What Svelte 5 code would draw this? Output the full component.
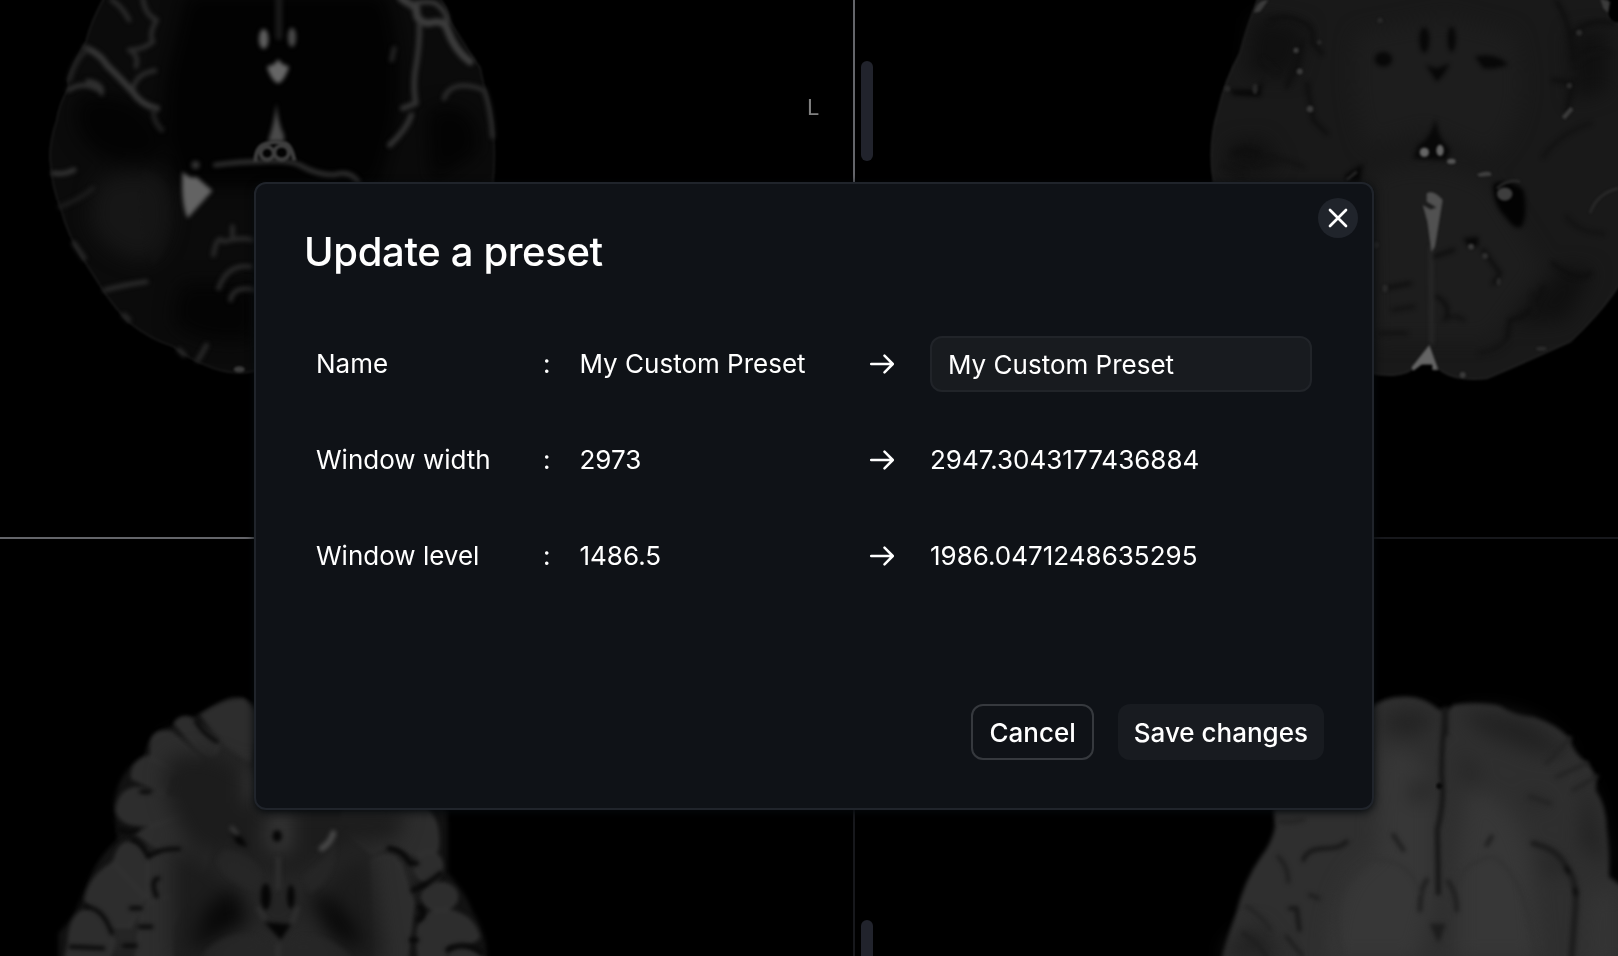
<script>
  let name = $state('My Custom Preset');
  const rows = [
    { label: 'Window width', from: '2973', to: '2947.3043177436884' },
    { label: 'Window level', from: '1486.5', to: '1986.0471248635295' }
  ];
</script>

{#snippet arrow()}
  <svg class="arrow" viewBox="0 0 24 20" fill="none" stroke="#fff" stroke-width="2.5" stroke-linecap="round" stroke-linejoin="round">
    <path d="M1.2 10H22.8M14.5 1.7L22.8 10L14.5 18.3" />
  </svg>
{/snippet}

<div class="screen">
  <div class="viewport active">
    <svg class="scan" viewBox="0 0 853 537" preserveAspectRatio="xMinYMin slice">
      <defs>
        <filter id="s1" x="-20%" y="-20%" width="140%" height="140%" color-interpolation-filters="sRGB"><feGaussianBlur stdDeviation="6" /></filter>
        <filter id="s2" x="-30%" y="-30%" width="160%" height="160%" color-interpolation-filters="sRGB"><feGaussianBlur stdDeviation="28" /></filter>
        <filter id="edge" x="-20%" y="-20%" width="140%" height="140%" color-interpolation-filters="sRGB"><feGaussianBlur stdDeviation="3.5" /></filter>
      </defs>
      <g transform="scale(.3443 .3333)">
        <path filter="url(#edge)" fill="#0b0b0b" stroke="#191919" stroke-width="5" d="M310-20Q265 60 250 125Q215 185 197 240L200 262Q172 310 165 360Q140 440 147 490Q150 560 178 630Q195 700 240 775Q275 830 305 880Q340 930 372 965Q440 1020 500 1038Q550 1080 620 1105Q700 1132 760 1105L1180 1000L1400 700Q1432 600 1435 500Q1440 380 1415 290Q1400 240 1395 205Q1340 120 1305 60Q1300 10 1260-20Z" />
        <g filter="url(#s2)">
          <path fill="#020202" d="M540-20L1120-20Q1180 180 1150 380L1100 560L520 560Q440 340 510 120Z" />
          <path fill="#030303" d="M230 290Q420 260 470 410Q500 520 300 470Q190 400 230 290M1240 330Q1400 280 1390 460L1250 550Z" />
          <path fill="#161616" d="M280 550Q400 490 480 550Q520 740 420 780Q300 770 260 660Z" />
          <path fill="#040404" d="M520 850L740 850V1020Q580 1040 500 970Z" />
        </g>
        <path filter="url(#s1)" fill="#151515" opacity=".35" d="M410 510Q490 520 495 610Q505 760 440 800Q410 660 410 510Z" />
        <g filter="url(#s1)" fill="none" stroke-linecap="round" stroke-linejoin="round">
          <g stroke="#363636" stroke-width="14">
            <path d="M325 0Q355 20 375 60M415-5Q420 45 455 60Q430 105 445 125Q415 150 375 150Q405 165 395 200M450 212Q395 220 385 270" stroke="#2a2a2a" />
            <path d="M250 145Q290 160 310 195Q345 230 385 275Q410 315 455 325" stroke-width="19" />
            <path d="M445 330Q445 365 470 390" stroke="#212121" />
            <path d="M200 270Q245 240 295 275M255 243Q300 250 295 280" stroke="#303030" />
            <path d="M250 150Q215 185 202 240" stroke="#242424" />
            <path d="M155 520Q185 525 215 510" />
            <path d="M175 620Q230 600 270 565" stroke="#1c1c1c" />
            <path d="M305 870Q360 855 425 845" stroke="#2a2a2a" />
            <path d="M215 730L245 775M360 945L375 960M520 1050L535 1065M575 1080Q590 1055 600 1035" stroke="#292929" />
            <path d="M1165-5L1210 25Q1205 65 1245 70Q1290 55 1300 90Q1320 150 1365 185" stroke="#3d3d3d" stroke-width="22" />
            <path d="M1190 15Q1230 0 1265 10Q1300 35 1300 70" stroke="#393939" />
            <path d="M1218 75Q1220 135 1205 220Q1200 270 1208 310L1170 325M1195 345Q1180 390 1132 435" stroke="#333" stroke-width="16" />
            <path d="M1145 145L1138 180" stroke="#242424" />
            <path d="M1290 295Q1310 235 1405 270Q1425 320 1430 410" stroke="#2b2b2b" />
            <path d="M625 495Q700 485 750 485Q840 478 870 495Q920 525 970 525Q1015 510 1040 545" stroke="#303030" />
            <path d="M620 765Q630 700 650 725Q695 710 735 720M675 680V705M635 865Q660 790 730 800M670 900Q675 855 745 870" stroke="#292929" />
          </g>
          <path d="M810-10V110" stroke="#191919" stroke-width="20" />
        </g>
        <g filter="url(#s1)" fill="#666">
          <ellipse cx="766" cy="117" rx="14" ry="30" fill="#5d5d5d" />
          <ellipse cx="848" cy="112" rx="12" ry="29" fill="#484848" />
          <path d="M775 200L797 192L808 178L820 192L840 200Q825 245 808 250Q789 245 775 200Z" />
          <path d="M803 310Q807 370 825 405V425H778Q797 370 803 310Z" fill="#4a4a4a" />
          <path d="M530 515Q555 540 570 530L617 572L545 655Q525 610 530 515Z" fill="#636363" />
          <circle cx="568" cy="495" r="12" fill="#333" />
        </g>
        <g filter="url(#edge)" fill="none" stroke="#3e3e3e" stroke-width="12"><path d="M742 485Q742 435 780 430Q798 420 825 430Q845 430 855 482" /><circle cx="776" cy="460" r="19" /><circle cx="818" cy="458" r="21" /></g>
        <ellipse cx="695" cy="1108" rx="16" ry="9" fill="#3c3c3c" filter="url(#edge)" />
      </g>
    </svg>
    <span class="side">L</span>
  </div>

  <div class="viewport">
    <svg class="scan" viewBox="855 0 763 537" preserveAspectRatio="xMinYMin slice">
      <g transform="translate(1180 0) scale(.33333)">
        <path filter="url(#edge)" fill="#191919" stroke="#1f1f1f" stroke-width="6" d="M240-20Q200 80 180 160Q135 240 115 330Q83 430 100 540Q120 850 350 1010Q520 1130 640 1125Q690 1120 705 1100Q745 1070 775 1105Q820 1145 920 1135Q1050 1080 1170 1025Q1250 950 1300 880L1340 820V70L1300 70Q1270 50 1285-20H240Z" />
        <g filter="url(#s2)">
          <path fill="#1d1d1d" d="M530 100Q500 280 560 440L740 390L930 470Q1070 350 1000 100L800 50Z" />
          <path fill="#1f1f1f" d="M570 530Q740 450 930 550L1090 800L930 1020H580Z" opacity=".75" />
          <path fill="#101010" d="M220 50L380 80L340 230L200 220ZM150 430L250 420L300 500L140 530ZM1170 100L1280 90V270L1180 300ZM1150 800L1240 810L1160 960L1000 970Z" />
        </g>
        <g filter="url(#s1)" fill="#080808">
          <ellipse cx="733" cy="120" rx="15" ry="38" /><ellipse cx="815" cy="118" rx="12" ry="38" />
          <path d="M738 195L770 205L810 190L790 225L770 245Z" />
          <ellipse cx="610" cy="178" rx="26" ry="22" /><path d="M885 170Q950 155 985 195L940 205L910 205Z" />
          <path d="M767 355Q773 405 790 425L810 450L800 480L700 475L715 435Q750 420 767 355Z" />
          <path d="M940 550Q990 535 1030 570Q1045 640 1025 680Q1005 690 980 655Q935 610 940 550Z" fill="#030303" />
          <path d="M495 525L550 490L540 545H500ZM850 715L895 710V735L870 745ZM150 270L230 270L250 240L240 290L160 285Z" />
        </g>
        <g filter="url(#s1)" fill="none" stroke="#0f0f0f" stroke-width="12" stroke-linecap="round">
          <path d="M270 60Q315 40 365 65Q410 85 395 125L425 160M365 130L350 200L320 260M380 250L400 360L440 400M160 460Q200 440 230 460M1130 5Q1170 60 1180 180M1120 240L1180 250L1160 330M1170 110Q1220 50 1300 70M1120 790Q1190 850 1230 820M1090 860Q1060 950 990 960L980 1020M910 750L960 820L940 850M615 865L690 850M760 770L820 750" />
          <path d="M230 490Q280 460 370 500M130 500L190 520M250 180L290 220M1190 190Q1230 150 1290 160M1090 470Q1140 400 1230 370M1160 650Q1200 700 1270 700M640 930L700 920M600 1000L680 1000M790 960Q830 940 850 960M900 1060Q950 1050 980 1020M1060 880V940" stroke="#131313" />
          <path d="M753 740L755 1030" stroke="#2d2d2d" stroke-width="9" />
          <path d="M770 890Q810 910 800 950" />
        </g>
        <g filter="url(#edge)" fill="#3c3c3c">
          <path d="M222 38Q230 0 265 0L240 35ZM1260-5L1290 5L1284 38L1270 25Z" />
          <circle cx="348" cy="151" r="8" /><circle cx="359" cy="214" r="9" /><circle cx="418" cy="127" r="7" fill="#292929" /><circle cx="390" cy="327" r="10" /><circle cx="600" cy="61" r="8" fill="#292929" />
          <circle cx="142" cy="266" r="9" fill="#282828" /><ellipse cx="225" cy="267" rx="8" ry="16" fill="#282828" />
          <circle cx="1197" cy="98" r="9" fill="#2d2d2d" /><circle cx="1168" cy="257" r="8" fill="#2d2d2d" /><path d="M1145 350L1172 320L1180 330L1155 358Z" />
          <circle cx="733" cy="457" r="14" fill="#666" /><ellipse cx="780" cy="451" rx="11" ry="17" fill="#666" /><ellipse cx="814" cy="484" rx="13" ry="8" fill="#555" />
          <path d="M890 523Q915 510 933 518V527L900 530Z" fill="#414141" /><ellipse cx="974" cy="582" rx="23" ry="20" fill="#3e3e3e" />
          <path d="M740 580Q760 568 788 600L765 740L754 755L742 665L728 615L752 628L769 622L740 605Z" fill="#515151" />
          <circle cx="873" cy="740" r="9" /><circle cx="915" cy="768" r="9" fill="#303030" /><ellipse cx="956" cy="845" rx="6" ry="11" fill="#2b2b2b" /><circle cx="586" cy="735" r="10" fill="#292929" /><ellipse cx="615" cy="865" rx="9" ry="12" fill="#292929" />
          <path d="M748 1035L775 1110H757V1093H725L700 1112L694 1103Z" fill="#656565" /><circle cx="848" cy="1125" r="9" /><ellipse cx="1084" cy="1046" rx="16" ry="6" fill="#2c2c2c" />
          <path d="M1230 640Q1250 580 1315 565M950 565Q985 535 1020 545M500 540L530 515" fill="none" stroke="#292929" stroke-width="8" />
        </g>
      </g>
    </svg>
    <i class="scroll top"></i>
  </div>

  <div class="viewport">
    <svg class="scan" viewBox="0 539 853 417" preserveAspectRatio="xMinYMin slice">
      <g transform="translate(0 660) scale(.3443 .33333)">
        <path filter="url(#s1)" fill="#121212" d="M670 112Q710 110 740 135L1270 430L1300 450V640Q1350 690 1375 760Q1415 820 1415 910H170V820Q220 770 245 690Q275 600 340 540L330 430Q345 330 420 285Q430 210 500 200Q510 165 560 170Z" />
        <path filter="url(#s2)" fill="#252525" d="M480 240L740 170V440H1230V620L1150 910H250L330 620L450 520Z" />
        <g filter="url(#s1)" fill="#2d2d2d" stroke="#323232" stroke-width="8">
          <path d="M580 165Q650 110 710 115L760 170L730 310Q690 290 645 250Z" stroke="none" /><path d="M510 190Q535 155 570 190L635 250Q630 310 580 270Z" /><path d="M440 260Q440 205 500 220L580 300L560 350L440 330Z" /><path d="M385 355Q380 310 430 290L500 330L480 400Z" /><path d="M340 450Q350 380 410 385L550 430L530 490L400 495Q350 490 340 450Z" /><path d="M395 520L540 460L620 520L590 640L500 590Z" />
          <path d="M335 600Q350 530 400 555L430 610V700L370 760L300 650Z" /><path d="M250 720Q260 650 330 610L420 710L380 800L310 800Z" /><path d="M200 850Q205 745 270 750Q320 780 330 850L310 910H190Z" /><path d="M430 600L510 570L580 640L500 800L430 760Z" /><path d="M410 770Q410 720 500 710V910H395Z" />
          <path d="M1000 440H1230Q1280 480 1270 570Q1230 590 1190 580Q1150 535 1080 580L990 500Z" /><path d="M1080 600Q1150 560 1170 640L1200 730L1180 910H1090Z" /><ellipse cx="1245" cy="620" rx="38" ry="45" /><ellipse cx="1277" cy="710" rx="50" ry="40" /><path d="M1215 870Q1200 760 1280 750Q1370 755 1390 830Q1370 860 1300 850L1290 910H1220Z" /><path d="M1310 870Q1370 850 1405 900V920H1300Z" />
        </g>
        <g filter="url(#s2)">
          <path fill="#1c1c1c" d="M490 300Q600 250 710 340L760 450L1180 450L1150 540L1000 550L930 650L700 620L560 560Q450 400 490 300Z" />
          <path fill="#1c1c1c" d="M500 560Q620 600 690 700L600 900H500ZM940 660L1070 570L1120 910H1000Z" />
          <path fill="#282828" d="M630 840Q720 750 800 850Q900 740 1010 910H600ZM650 560L760 630L730 740L640 630ZM880 640L960 570L950 660L870 730Z" />
          <path fill="#080808" d="M690 680L720 790L560 870L600 740ZM890 690Q1030 730 1050 870L960 830Z" />
          <path fill="#343434" d="M710 320H770V430H710ZM770 470L850 440V580H770Z" />
        </g>
        <g filter="url(#s1)">
          <path fill="#272727" opacity=".7" d="M650 570Q740 580 760 640Q750 700 730 690Q650 660 630 600ZM880 650Q950 600 975 550Q980 650 900 700ZM600 870Q700 780 800 865Q910 780 1020 890V910H580Z" />
          <g fill="#060606"><ellipse cx="805" cy="528" rx="14" ry="18" /><ellipse cx="772" cy="710" rx="15" ry="40" /><ellipse cx="845" cy="710" rx="11" ry="36" /><path d="M775 790L840 795L815 835Z" stroke="#060606" stroke-width="6" /><path d="M675 520Q705 530 715 558L690 550Z" stroke="#060606" stroke-width="5" /></g>
          <path d="M935 565Q960 550 968 520" stroke="#484848" stroke-width="18" fill="none" stroke-linecap="round" /><path d="M670 500L690 525" stroke="#393939" stroke-width="13" />
          <path d="M808 590V690M808 850V900M750 740L770 780M865 740L848 790" stroke="#2e2e2e" stroke-width="15" fill="none" />
          <g fill="none" stroke="#070707" stroke-width="12" stroke-linecap="round">
            <path d="M570 185Q590 220 630 245M410 395H435M345 508Q375 525 400 510M385 540Q415 550 430 590Q460 565 520 567M460 655Q435 660 455 710M380 745H410M405 800H440M360 857H395M250 740Q300 745 325 820M205 860L300 865" />
            <path d="M1130 565Q1170 570 1190 610L1210 610M1200 690Q1240 675 1280 640M1220 740Q1240 770 1215 780M1195 840H1210M1300 870Q1350 840 1400 880" stroke-width="15" />
          </g>
        </g>
      </g>
    </svg>
  </div>

  <div class="viewport">
    <svg class="scan" viewBox="855 539 763 417" preserveAspectRatio="xMinYMin slice">
      <g transform="translate(1180 660) scale(.33333)">
        <path filter="url(#s1)" fill="#2f2f2f" d="M280 440L560 150Q610 108 675 110Q730 108 775 148Q800 158 820 134Q900 124 960 138Q1000 168 1060 171Q1130 193 1167 233Q1178 278 1227 313Q1255 350 1247 390Q1280 440 1280 510Q1290 590 1287 650L1340 690V920H120Q135 850 168 760Q193 660 243 590Q275 550 285 500Z" />
        <g filter="url(#s2)">
          <path fill="#373737" d="M600 280Q740 220 760 450L760 720L710 900H450Q450 650 590 580ZM860 400Q1000 390 1050 600L1080 900H830V620Z" />
          <path fill="#222" d="M590 190Q690 120 770 180L690 230ZM840 160Q980 140 1080 200L1180 290L1060 280L910 220ZM690 370L760 380L700 440ZM840 270L900 350L860 370ZM1030 400L1120 430L1060 440ZM1080 570L1170 630L1100 640ZM150 850L230 790L320 900H130ZM1220 350L1280 620L1200 550Z" />
          <path fill="#343434" d="M1220 710Q1290 670 1320 710V920H1210Z" />
        </g>
        <g filter="url(#s1)" fill="none" stroke-linecap="round">
          <path d="M797 145Q785 240 785 350Q795 420 772 510Q775 620 775 700" stroke="#131313" stroke-width="13" />
          <path d="M795 150V220" stroke="#171717" stroke-width="20" />
          <path d="M370 600Q380 565 440 565Q480 565 500 545M330 745H350L358 810" stroke="#171717" stroke-width="13" />
          <path d="M295 590Q325 620 325 665M390 705L415 715M320 830L365 885M190 820Q240 850 265 900M640 525L670 570M920 555L935 530" stroke="#1f1f1f" stroke-width="13" />
          <path d="M1060 550Q1140 570 1160 625Q1195 660 1185 760L1175 890" stroke="#1c1c1c" stroke-width="18" />
          <path d="M1160 625L1165 635M1185 690L1188 700" stroke="#0e0e0e" stroke-width="16" />
          <path d="M1170 235L1100 310M1220 310L1130 350M1250 350L1180 390M1050 410L1110 430M200 740Q250 770 270 810M300 485Q330 490 370 480" stroke="#242424" stroke-width="13" />
          <path d="M740 660Q720 690 720 750M805 665Q830 700 830 750" stroke="#202020" stroke-width="15" />
          <path d="M490 900Q420 680 570 600Q690 590 720 700M830 670Q860 600 940 590Q1040 650 1070 900" stroke="#313131" stroke-width="8" />
          <path d="M755 795L792 795L775 840Z" fill="#1d1d1d" stroke="#1d1d1d" stroke-width="8" />
        </g>
        <circle cx="778" cy="378" r="9" fill="#0a0a0a" filter="url(#edge)" />
      </g>
    </svg>
    <i class="scroll bottom"></i>
  </div>

  <form class="dialog" onsubmit={(e) => e.preventDefault()}>
    <button class="close" type="button" aria-label="Close">
      <svg viewBox="0 0 20 20" fill="none" stroke="#fff" stroke-width="2.7" stroke-linecap="round"><path d="M2 2L18 18M18 2L2 18" /></svg>
    </button>
    <h1>Update a preset</h1>
    <div class="rows">
      <div class="row">
        <span>Name</span><span>:</span><span>My Custom Preset</span>{@render arrow()}
        <input bind:value={name} />
      </div>
      {#each rows as row}
        <div class="row">
          <span>{row.label}</span><span>:</span><span>{row.from}</span>{@render arrow()}
          <span>{row.to}</span>
        </div>
      {/each}
    </div>
    <footer>
      <button class="btn outline" type="button">Cancel</button>
      <button class="btn" type="submit">Save changes</button>
    </footer>
  </form>
</div>

<style>
  :global(body) { background: #000; }
  .screen {
    position: relative;
    display: grid;
    grid-template-columns: 855px 763px;
    grid-template-rows: 539px 417px;
    width: 1618px;
    height: 956px;
    overflow: hidden;
    background: #000;
    font-family: Inter, sans-serif;
    color: #fff;
  }
  .viewport {
    position: relative;
    box-sizing: border-box;
    overflow: hidden;
    border: 0 solid #17181c;
  }
  .viewport:nth-child(odd) { border-right-width: 2px; }
  .viewport:nth-child(-n + 2) { border-bottom-width: 2px; }
  .viewport.active { border-color: #64656a; }
  .scan { display: block; width: 100%; height: 100%; }
  .side {
    position: absolute;
    left: 807px;
    top: 94px;
    font-size: 22px;
    line-height: 27px;
    color: #808080;
    will-change: transform;
  }
  .scroll {
    position: absolute;
    left: 6px;
    width: 12px;
    height: 100px;
    border-radius: 6px;
    background: #21232c;
  }
  .scroll.top { top: 61px; }
  .scroll.bottom { top: 381px; }
  .dialog {
    position: absolute;
    left: 254px;
    top: 182px;
    box-sizing: border-box;
    width: 1120px;
    height: 628px;
    padding: 44px 48px 48px;
    display: flex;
    flex-direction: column;
    border: 2px solid #20242b;
    border-radius: 12px;
    background: #0f1217;
    box-shadow: 0 2px 8px #05090c;
  }
  h1 {
    margin: 0;
    font-size: 40px;
    line-height: 48px;
    font-weight: 500;
    letter-spacing: -0.35px;
  }
  .rows { padding: 40px 12px 0; }
  .row {
    display: grid;
    grid-template-columns: 227px 36.5px 290.5px 60px 382px;
    align-items: center;
    height: 96px;
    font-size: 26px;
  }
  .row span { position: relative; top: -1px; white-space: nowrap; }
  .arrow { width: 24px; height: 20px; }
  input {
    box-sizing: border-box;
    width: 382px;
    height: 56px;
    padding: 0 16px;
    border: 2px solid #212429;
    border-radius: 12px;
    outline: none;
    background: #181b1f;
    color: #fff;
    font: 400 26px Inter, sans-serif;
  }
  footer {
    display: flex;
    justify-content: flex-end;
    gap: 24px;
    margin-top: auto;
  }
  .btn {
    box-sizing: border-box;
    height: 56px;
    padding: 0 16px;
    border: 0;
    border-radius: 12px;
    background: #181b20;
    color: #fff;
    font: 500 26px Inter, sans-serif;
    white-space: nowrap;
  }
  .outline { border: 2px solid #36393e; background: none; }
  .close {
    position: absolute;
    top: 14px;
    right: 14px;
    display: grid;
    place-items: center;
    width: 40px;
    height: 40px;
    padding: 0;
    border: 0;
    border-radius: 50%;
    background: #20242b;
  }
  .close svg { width: 20px; height: 20px; }
</style>
